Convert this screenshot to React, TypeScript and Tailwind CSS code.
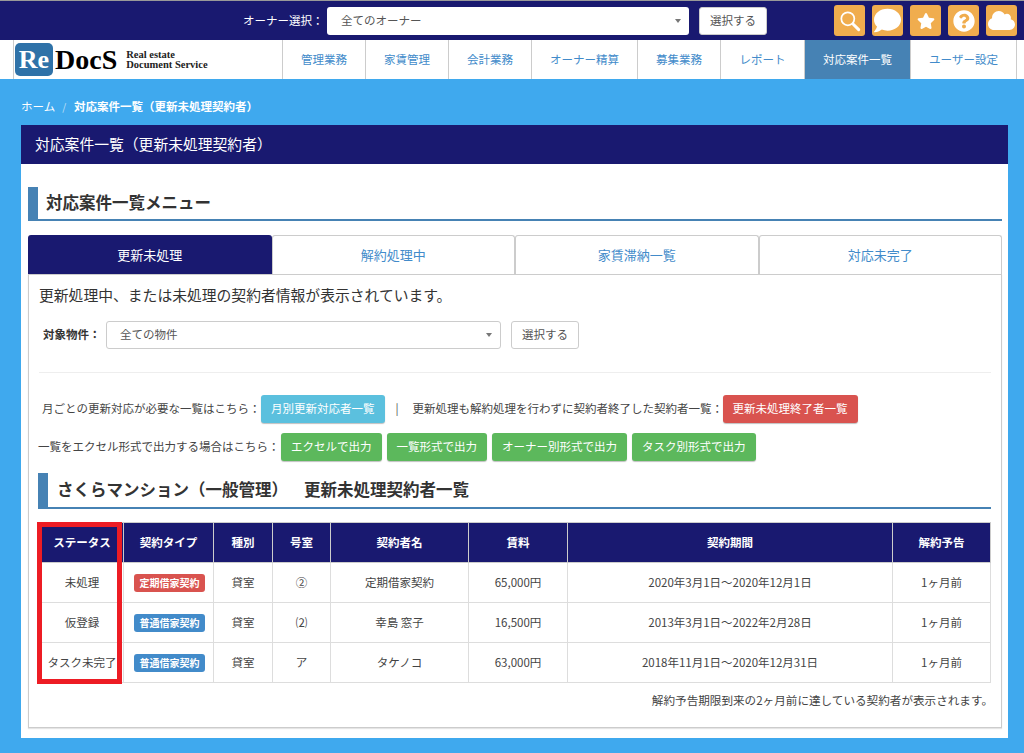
import { FaCloud, FaComment, FaQuestionCircle, FaStar } from "react-icons/fa"

const jp = { fontFamily: '"Noto Sans CJK JP", sans-serif' }

const navItems = [
  { label: "管理業務", width: "w-[83px]" },
  { label: "家賃管理", width: "w-[83px]" },
  { label: "会計業務", width: "w-[83px]" },
  { label: "オーナー精算", width: "w-[106px]" },
  { label: "募集業務", width: "w-[83px]" },
  { label: "レポート", width: "w-[84px]" },
  { label: "対応案件一覧", width: "w-[106px]", active: true },
  { label: "ユーザー設定", width: "w-[106px]" }
]

const rows = [
  { status: "未処理", type: "定期借家契約", badge: "bg-[#d9534f]", kind: "貸室", room: "②", name: "定期借家契約", rent: "65,000円", term: "2020年3月1日～2020年12月1日" },
  { status: "仮登録", type: "普通借家契約", badge: "bg-[#428bca]", kind: "貸室", room: "⑵", name: "幸島 窓子", rent: "16,500円", term: "2013年3月1日～2022年2月28日" },
  { status: "タスク未完了", type: "普通借家契約", badge: "bg-[#428bca]", kind: "貸室", room: "ア", name: "タケノコ", rent: "63,000円", term: "2018年11月1日～2020年12月31日" }
]

const headers = [
  { label: "ステータス", width: "w-[83px]" },
  { label: "契約タイプ", width: "w-[90px]" },
  { label: "種別", width: "w-[59px]" },
  { label: "号室", width: "w-[58px]" },
  { label: "契約者名", width: "w-[138px]" },
  { label: "賃料", width: "w-[99px]" },
  { label: "契約期間", width: "w-[325px]" },
  { label: "解約予告", width: "w-[98px]" }
]

function Caret() {
  return <span className="h-0 w-0 border-x-[3px] border-t-[4px] border-x-transparent border-t-[#777]" />
}

function IconTile({ children }: { children: React.ReactNode }) {
  return (
    <div className="flex h-[31px] w-[31px] items-center justify-center rounded-[3px] bg-[#f0ad4e] text-white">
      {children}
    </div>
  )
}

function SolidButton({ color, children }: { color: string; children: React.ReactNode }) {
  return (
    <span className={`flex h-[28px] items-center rounded-[3px] px-[10px] text-[11.5px] whitespace-nowrap text-white shadow-[0_1px_1px_rgba(0,0,0,0.25)] ${color}`}>
      {children}
    </span>
  )
}

function WhiteButton({ className }: { className: string }) {
  return (
    <span className={`flex items-center justify-center rounded-[3px] border border-[#ccc] bg-white text-[11.5px] text-[#555] ${className}`}>
      選択する
    </span>
  )
}

export default function App() {
  return (
    <div className="h-[753px] w-[1024px] overflow-hidden bg-[#3fa9ee]" style={jp}>
      <header className="flex h-[40px] items-center border-t border-[#999] bg-[#191970] pl-[243px]">
        <span className="w-[84px] text-[11.5px] text-white">オーナー選択：</span>
        <div className="flex h-[28px] w-[362px] items-center justify-between rounded-[3px] bg-white pl-[14px] pr-[8px] text-[11.5px] text-[#555]">
          全てのオーナー
          <Caret />
        </div>
        <WhiteButton className="ml-[10px] h-[28px] w-[68px]" />
        <div className="ml-[67px] flex gap-[7px]">
          <IconTile>
            <svg width="26" height="26" viewBox="0 0 24 24" fill="none" stroke="currentColor">
              <circle cx="10" cy="10" r="6" strokeWidth="1.6" />
              <path d="M15 15l5 5" strokeWidth="2.8" strokeLinecap="round" />
            </svg>
          </IconTile>
          <IconTile><FaComment size={27} /></IconTile>
          <IconTile><FaStar size={18} /></IconTile>
          <IconTile><FaQuestionCircle size={22} /></IconTile>
          <IconTile><FaCloud size={27} /></IconTile>
        </div>
      </header>

      <nav className="flex h-[39px] bg-white pl-[13px]">
        <div className="flex w-[269px] items-center border-l border-[#ccc] pl-[1px]">
          <span className="flex h-[33px] w-[38px] items-center justify-center rounded-[5px] bg-[#2f72a8] text-[26px] font-bold text-white" style={{ fontFamily: '"Liberation Serif", serif' }}>
            Re
          </span>
          <span className="ml-[2px] text-[28px] leading-none font-bold text-black" style={{ fontFamily: '"Liberation Serif", serif' }}>
            DocS
          </span>
          <span className="ml-[9px] mt-[1px] text-[10.5px] leading-[10px] font-bold whitespace-nowrap text-[#222]" style={{ fontFamily: '"Liberation Serif", serif' }}>
            Real estate<br />Document Service
          </span>
        </div>
        {navItems.map((item) => (
          <div
            key={item.label}
            className={`flex items-center justify-center border-l border-[#ccc] text-[11.5px] ${item.width} ${item.active ? "bg-[#4682b4] text-white" : "text-[#428bca]"}`}
          >
            {item.label}
          </div>
        ))}
        <div className="w-[1px] bg-[#ccc]" />
      </nav>

      <div className="flex h-[46px] items-center pl-[21px] pt-[9px] text-[11.5px] text-white">
        ホーム
        <span className="ml-[7px] mr-[8px] text-[10px] text-[#c5e0f5]">/</span>
        <span className="font-bold">対応案件一覧（更新未処理契約者）</span>
      </div>

      <main className="mx-[21px] h-[613px] w-[987px] bg-white">
        <h1 className="flex h-[39px] items-center bg-[#191970] pl-[14px] text-[14.8px] font-normal text-white">
          対応案件一覧（更新未処理契約者）
        </h1>

        <div className="px-[7px] pt-[23px]">
          <h2 className="mr-[-1px] h-[34px] border-b-2 border-l-[10px] border-[#4682b4] pl-[8px] text-[16.5px] leading-[30px] font-bold text-[#333]">
            対応案件一覧メニュー
          </h2>

          <div className="mt-[14px] flex h-[39px] w-[974px] text-[13px]">
            <div className="flex w-[243.5px] items-center justify-center rounded-t-[3px] bg-[#191970] text-white">更新未処理</div>
            {["解約処理中", "家賃滞納一覧", "対応未完了"].map((tab) => (
              <div key={tab} className="flex w-[243.5px] items-center justify-center rounded-t-[3px] border border-b-0 border-[#ccc] text-[#428bca]">
                {tab}
              </div>
            ))}
          </div>

          <section className="h-[454px] w-[974px] border border-[#ccc] shadow-[0_1px_1px_rgba(0,0,0,0.1)]">
            <p className="pl-[10px] pt-[9px] text-[14.8px] leading-[22px] text-[#333]">
              更新処理中、または未処理の契約者情報が表示されています。
            </p>

            <div className="mt-[15px] flex items-center pl-[14px]">
              <span className="w-[63px] text-[11.5px] font-bold text-[#333]">対象物件：</span>
              <div className="flex h-[28px] w-[395px] items-center justify-between rounded-[3px] border border-[#ccc] pl-[13px] pr-[8px] text-[11.5px] text-[#555]">
                全ての物件
                <Caret />
              </div>
              <WhiteButton className="ml-[10px] h-[28px] w-[68px]" />
            </div>

            <div className="mx-[10px] mt-[23px] border-t border-[#eee]" />

            <div className="mt-[22px] flex items-center pl-[13px] text-[11.5px] whitespace-nowrap text-[#444]">
              <span className="w-[219px]">月ごとの更新対応が必要な一覧はこちら：</span>
              <SolidButton color="bg-[#5bc0de]">月別更新対応者一覧</SolidButton>
              <span className="ml-[11px] mr-[14px] text-[#555]">|</span>
              <span className="w-[310px]">更新処理も解約処理を行わずに契約者終了した契約者一覧：</span>
              <SolidButton color="bg-[#d9534f]">更新未処理終了者一覧</SolidButton>
            </div>

            <div className="mt-[10px] flex items-center gap-[5px] pl-[9px] text-[11.5px] whitespace-nowrap text-[#444]">
              <span className="w-[238px]">一覧をエクセル形式で出力する場合はこちら：</span>
              <SolidButton color="bg-[#5cb85c]">エクセルで出力</SolidButton>
              <SolidButton color="bg-[#5cb85c]">一覧形式で出力</SolidButton>
              <SolidButton color="bg-[#5cb85c]">オーナー別形式で出力</SolidButton>
              <SolidButton color="bg-[#5cb85c]">タスク別形式で出力</SolidButton>
            </div>

            <h3 className="ml-[9px] mt-[12px] h-[36px] w-[953px] border-b-2 border-l-[10px] border-[#4682b4] pl-[9px] text-[16.5px] leading-[32px] font-bold text-[#333]">
              さくらマンション（一般管理）<span className="ml-[16px]">更新未処理契約者一覧</span>
            </h3>

            <div className="relative ml-[11px] mt-[13px] w-[950px]">
              <table className="w-[950px] table-fixed border-collapse text-center text-[11.5px] text-[#444]">
                <thead>
                  <tr className="h-[40px] bg-[#191970] text-white">
                    {headers.map((h) => (
                      <th key={h.label} className={`border border-[#ccc] text-[11.5px] font-bold ${h.width}`}>{h.label}</th>
                    ))}
                  </tr>
                </thead>
                <tbody>
                  {rows.map((row) => (
                    <tr key={row.status} className="h-[40px]">
                      <td className="border border-[#ddd] whitespace-nowrap">{row.status}</td>
                      <td className="border border-[#ddd]">
                        <span className={`ml-[2px] inline-block h-[18px] w-[71px] rounded-[3px] text-[10px] leading-[18px] font-bold whitespace-nowrap text-white ${row.badge}`}>
                          {row.type}
                        </span>
                      </td>
                      <td className="border border-[#ddd]">{row.kind}</td>
                      <td className="border border-[#ddd]">{row.room}</td>
                      <td className="border border-[#ddd]">{row.name}</td>
                      <td className="border border-[#ddd]">{row.rent}</td>
                      <td className="border border-[#ddd]">{row.term}</td>
                      <td className="border border-[#ddd]">1ヶ月前</td>
                    </tr>
                  ))}
                </tbody>
              </table>
              <div className="absolute left-[-3px] top-0 h-[162px] w-[85px] border-[5px] border-[#ed1c24]" />
            </div>

            <p className="mt-[9px] pr-[8px] text-right text-[11.6px] text-[#444]">
              解約予告期限到来の2ヶ月前に達している契約者が表示されます。
            </p>
          </section>
        </div>
      </main>
    </div>
  )
}
